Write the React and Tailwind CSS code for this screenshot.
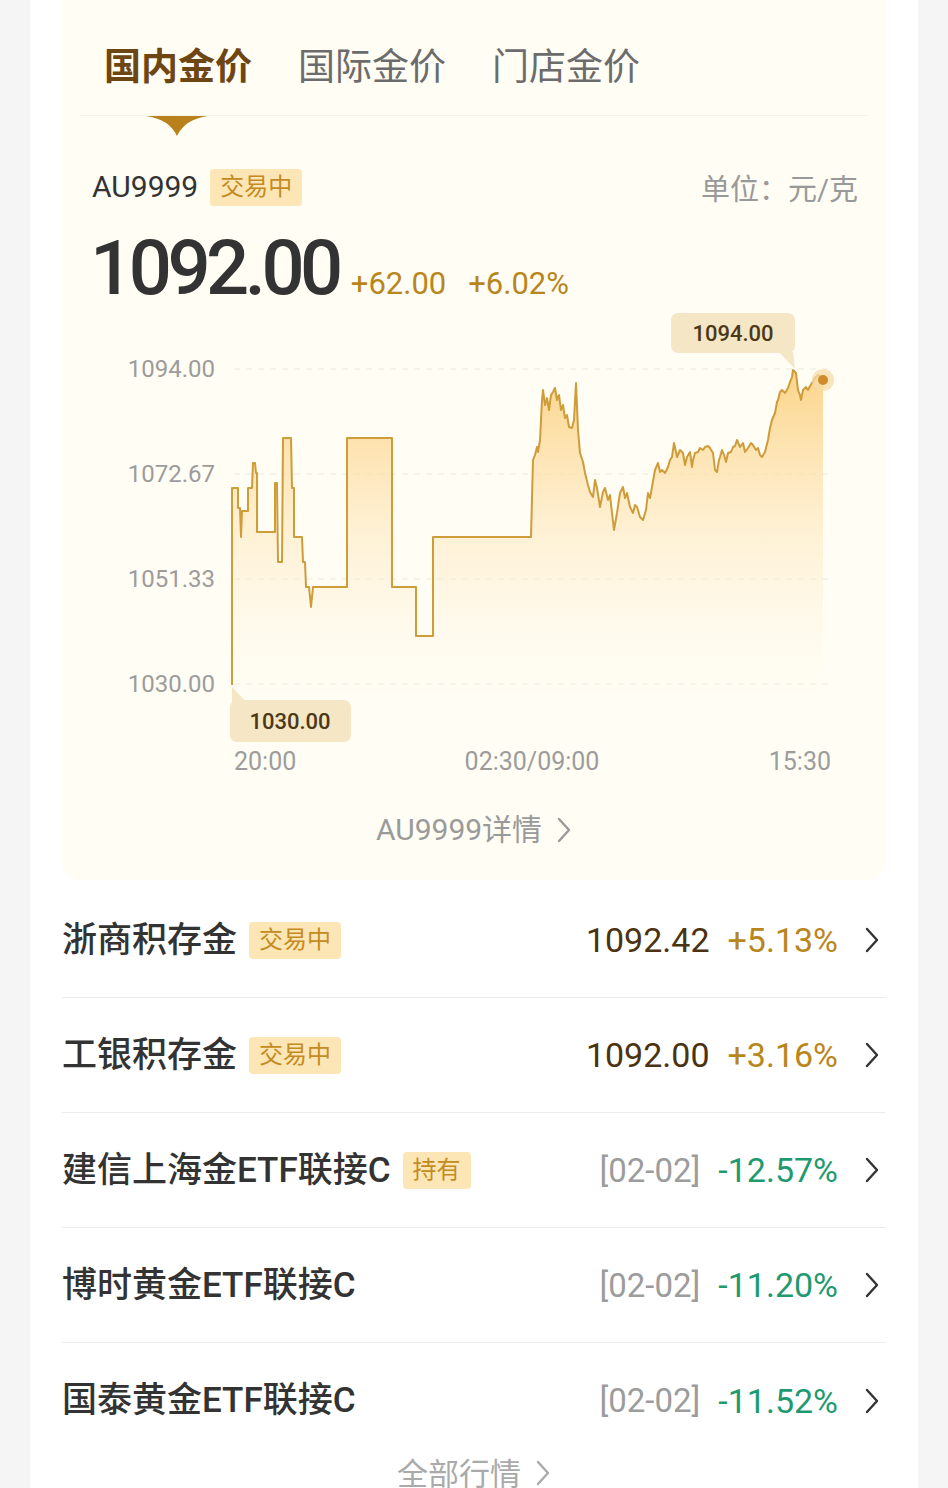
const linePts = [
  [232, 685], [232, 488], [238, 488], [238, 508], [240, 508], [241, 537], [242, 511],
  [248, 511], [248, 488], [252, 488], [253, 463], [255, 463], [256, 473], [257, 473],
  [257, 532], [275, 532], [275, 483], [277, 483], [278, 562], [282, 562], [283, 438],
  [291, 438], [292, 488], [294, 488], [294, 537], [302, 537], [303, 562], [305, 562],
  [306, 587], [309, 587], [311, 607], [313, 587], [347, 587], [347, 438], [392, 438],
  [392, 587], [416, 587], [416, 636], [433, 636], [433, 537], [531, 537],
  [533, 460], [535, 455], [537, 447], [538, 452], [540, 440], [542, 400], [543, 390],
  [545, 405], [547, 398], [549, 410], [551, 395], [553, 392], [555, 388], [557, 400],
  [559, 395], [561, 410], [563, 405], [565, 418], [567, 415], [569, 427], [572, 428],
  [574, 420], [576, 383], [578, 430], [580, 453], [583, 462], [585, 473], [588, 485],
  [590, 492], [593, 497], [595, 480], [597, 488], [600, 507], [603, 492], [605, 488],
  [608, 500], [610, 495], [612, 513], [614, 530], [617, 513], [620, 493], [623, 487],
  [625, 498], [627, 493], [630, 507], [633, 513], [635, 505], [637, 507], [640, 517],
  [643, 520], [646, 510], [648, 493], [650, 498], [652, 487], [655, 470], [658, 463],
  [660, 472], [662, 470], [665, 473], [668, 467], [670, 460], [672, 457], [674, 443],
  [676, 452], [677, 457], [680, 450], [683, 453], [685, 465], [687, 457], [690, 452],
  [692, 467], [693, 460], [695, 453], [698, 452], [700, 448], [703, 450], [705, 447],
  [708, 446], [710, 448], [713, 453], [715, 470], [717, 472], [719, 460], [720, 457],
  [722, 450], [724, 455], [726, 462], [728, 453], [731, 452], [733, 447], [735, 446],
  [737, 440], [740, 447], [743, 443], [745, 452], [748, 448], [751, 443], [753, 445],
  [756, 450], [758, 448], [760, 455], [762, 457], [765, 452], [768, 440], [770, 428],
  [772, 420], [775, 413], [777, 402], [778, 400], [780, 392], [782, 390], [785, 393],
  [788, 388], [790, 382], [792, 377], [793, 370], [796, 373], [798, 390], [800, 395],
  [801, 400], [803, 390], [806, 387], [808, 390], [810, 386], [812, 383], [815, 378],
  [818, 375], [820, 376], [823, 380],
];

const lineD = linePts.map((p, i) => (i === 0 ? "M" : "L") + p[0] + "," + p[1]).join(" ");
const areaD = lineD + " L823,690 L232,690 Z";

function Chevron({ className = "", color = "#333" }) {
  return (
    <svg width="16" height="28" viewBox="0 0 16 28" className={className}>
      <polyline
        points="3,3 13,14 3,25"
        fill="none"
        stroke={color}
        strokeWidth="2.4"
        strokeLinecap="round"
        strokeLinejoin="round"
      />
    </svg>
  );
}

function Badge({ text }) {
  return (
    <span className="ml-[12px] inline-flex h-[37px] items-center rounded-[4px] bg-[#fde6b6] px-[10px] text-[24px] leading-none text-[#c38b22]">
      {text}
    </span>
  );
}

function Chart() {
  const grid = [
    [369, "1094.00"],
    [474, "1072.67"],
    [579, "1051.33"],
    [684, "1030.00"],
  ];
  const axis = { fontFamily: "Roboto, sans-serif", fill: "#9c9c9c" };
  return (
    <svg width="824" height="484" viewBox="62 306 824 484" className="block">
      <defs>
        <linearGradient id="gold" x1="0" y1="370" x2="0" y2="690" gradientUnits="userSpaceOnUse">
          <stop offset="0" stopColor="#fbcf7c" stopOpacity="0.9" />
          <stop offset="0.45" stopColor="#fde2ad" stopOpacity="0.55" />
          <stop offset="1" stopColor="#fff6e2" stopOpacity="0.05" />
        </linearGradient>
      </defs>
      {grid.map(([y, label]) => (
        <g key={label}>
          <line x1="234" y1={y} x2="834" y2={y} stroke="#eee9dc" strokeWidth="1.2" strokeDasharray="6 6" />
          <text x="215" y={y + 8} textAnchor="end" fontSize="24" {...axis}>
            {label}
          </text>
        </g>
      ))}
      <path d={areaD} fill="url(#gold)" />
      <path d={lineD} fill="none" stroke="#cf9c3a" strokeWidth="2" strokeLinejoin="round" />
      <circle cx="823" cy="380" r="11" fill="#f6dcab" opacity="0.75" />
      <circle cx="823" cy="380" r="5" fill="#d08a28" />

      <polygon points="779,352 793,352 795,369" fill="#f5e6c6" />
      <rect x="671" y="313" width="124" height="40" rx="7" fill="#f5e6c6" />
      <text x="733" y="341" textAnchor="middle" fontSize="22" fontWeight="500" fill="#4a3818" fontFamily="Roboto, sans-serif">
        1094.00
      </text>

      <polygon points="232,687 232,703 247,703" fill="#f5e6c6" />
      <rect x="230" y="700" width="121" height="42" rx="7" fill="#f5e6c6" />
      <text x="290" y="729" textAnchor="middle" fontSize="22" fontWeight="500" fill="#4a3818" fontFamily="Roboto, sans-serif">
        1030.00
      </text>

      <text x="234" y="770" fontSize="25" {...axis}>
        20:00
      </text>
      <text x="532" y="770" textAnchor="middle" fontSize="25" {...axis}>
        02:30/09:00
      </text>
      <text x="831" y="770" textAnchor="end" fontSize="25" {...axis}>
        15:30
      </text>
    </svg>
  );
}

const rows = [
  { name: "浙商积存金", badge: "交易中", price: "1092.42", change: "+5.13%", up: true },
  { name: "工银积存金", badge: "交易中", price: "1092.00", change: "+3.16%", up: true },
  { name: "建信上海金ETF联接C", badge: "持有", date: "[02-02]", change: "-12.57%" },
  { name: "博时黄金ETF联接C", date: "[02-02]", change: "-11.20%" },
  { name: "国泰黄金ETF联接C", date: "[02-02]", change: "-11.52%" },
];

export default function App() {
  return (
    <div className="h-[1488px] overflow-hidden bg-[#f5f5f5] px-[30px] font-['Roboto','Noto_Sans_CJK_SC',sans-serif]">
      <div className="h-full bg-white px-[32px]">
        {/* 金价面板 */}
        <div className="rounded-b-[18px] bg-[#fffdf4] pb-[10px]">
          <div className="flex gap-[46px] pl-[42px] pt-[46px]">
            <span className="text-[37px] font-bold leading-[44px] text-[#6e4613]">国内金价</span>
            <span className="text-[37px] leading-[44px] text-[#6c6c6c]">国际金价</span>
            <span className="text-[37px] leading-[44px] text-[#6c6c6c]">门店金价</span>
          </div>
          <div className="mx-[18px] mt-[25px] h-px bg-[#f8f3e6]" />
          <svg width="62" height="20" viewBox="0 0 62 20" className="ml-[84px] block">
            <path d="M0,0 L62,0 Q39,3 31,20 Q23,3 0,0 Z" fill="#b8811c" />
          </svg>

          <div className="mt-[31px] flex h-[40px] items-center justify-between pl-[30px] pr-[28px]">
            <div className="flex items-center">
              <span className="text-[30px] leading-none text-[#333]">AU9999</span>
              <Badge text="交易中" />
            </div>
            <span className="pt-[6px] text-[29px] leading-none text-[#999]">单位：元/克</span>
          </div>

          <div className="mt-[23px] flex items-baseline pl-[28px]">
            <span className="text-[76px] font-medium leading-none tracking-[-4.5px] text-[#333]">1092.00</span>
            <span className="ml-[12px] text-[31px] leading-none text-[#b8861b]">+62.00</span>
            <span className="ml-[22px] text-[31px] leading-none text-[#b8861b]">+6.02%</span>
          </div>

          <Chart />

          <div className="flex h-[80px] items-center justify-center gap-[14px]">
            <span className="text-[30px] leading-none text-[#9a9a9a]">AU9999详情</span>
            <Chevron color="#9a9a9a" />
          </div>
        </div>

        {/* 行情列表 */}
        <div className="mt-[3px]">
          {rows.map((r, i) => (
            <div
              key={r.name}
              className={
                "flex h-[115px] items-center justify-between pr-[6px] " +
                (i < rows.length - 1 ? "border-b border-[#ececec]" : "")
              }
            >
              <div className="flex items-center">
                <span className="text-[35px] font-medium leading-none text-[#333]">{r.name}</span>
                {r.badge && <Badge text={r.badge} />}
              </div>
              <div className="flex items-center">
                {r.price && <span className="text-[34px] leading-none text-[#4b3210]">{r.price}</span>}
                {r.date && <span className="text-[33px] leading-none text-[#9c9c9c]">{r.date}</span>}
                <span
                  className={
                    "ml-[18px] text-[34px] leading-none " + (r.up ? "text-[#b8861b]" : "text-[#1f9a70]")
                  }
                >
                  {r.change}
                </span>
                <Chevron className="ml-[26px]" />
              </div>
            </div>
          ))}
          <div className="flex items-start justify-center gap-[14px] pt-[1px]">
            <span className="text-[31px] leading-none text-[#aaa]">全部行情</span>
            <Chevron color="#aaa" />
          </div>
        </div>
      </div>
    </div>
  );
}
